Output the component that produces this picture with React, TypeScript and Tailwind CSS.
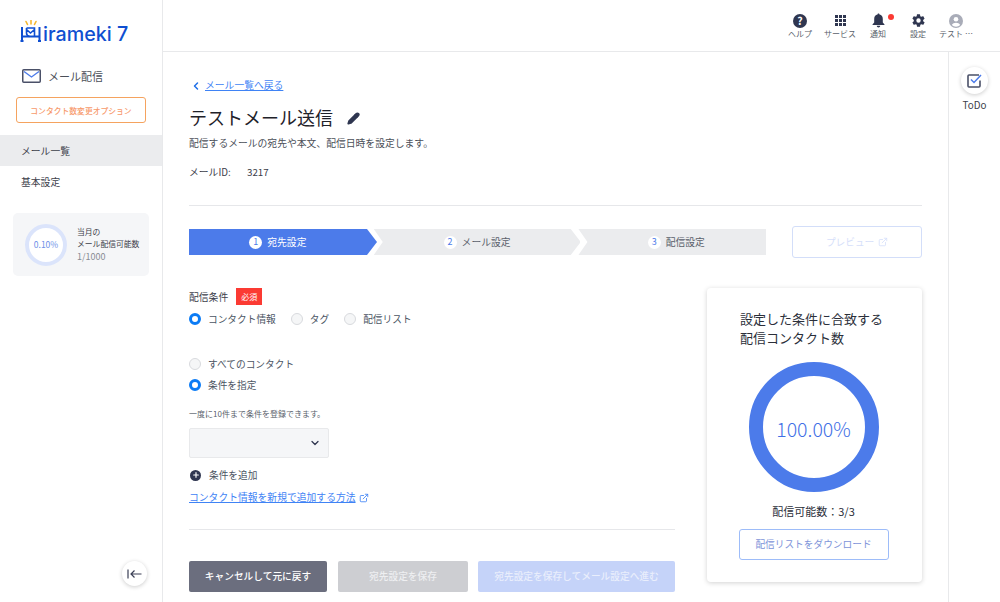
import React from 'react';
import { ChevronDown, ChevronLeft, ExternalLink, Pencil, Plus } from 'lucide-react';

const font = { fontFamily: '"Noto Sans CJK JP", "Noto Sans", sans-serif' };

const Radio: React.FC<{ label: string; checked?: boolean }> = ({ label, checked }) => (
  <label className="flex items-center gap-[7px] h-[14px] text-[9.7px] leading-[14px] text-[#4b5563] whitespace-nowrap">
    {checked ? (
      <span className="w-3 h-3 rounded-full border-[3.5px] border-[#0b7bf5] bg-white"></span>
    ) : (
      <span className="w-3 h-3 rounded-full border border-[#d8dade] bg-[#f5f6f7]"></span>
    )}
    {label}
  </label>
);

const HeaderItem: React.FC<{ label: string; children: React.ReactNode; className: string }> = ({ label, children, className }) => (
  <div className={`flex flex-col items-center ${className}`}>
    <div className="h-[15px] flex items-center justify-center relative">{children}</div>
    <span className="text-[8px] leading-[12px] text-[#5a5f6b] whitespace-nowrap">{label}</span>
  </div>
);

const Step: React.FC<{ num: number; label: string; active?: boolean; className: string }> = ({ num, label, active, className }) => (
  <div className={`h-[26px] flex items-center justify-center gap-[5px] text-[9.8px] ${active ? 'bg-[#4c7bea] text-white' : 'bg-[#ebecee] text-[#5a5f6b]'} ${className}`}>
    <span className="w-[13px] h-[13px] rounded-full bg-white flex items-center justify-center text-[9px] text-[#4c7bea]">{num}</span>
    <span className="pt-[1px]">{label}</span>
  </div>
);

const Logo = () => (
  <div className="flex items-end h-[28px] text-[#0f4fd1]">
    <svg width="23" height="22" viewBox="0 0 23 22" fill="none" className="shrink-0">
      <path d="M2 7v14M0.500 21h3M19.500 7v14M18 21h3M2 16.500h17.500" stroke="#0f4fd1" strokeWidth="2" />
      <path d="M6.500 8h8v8.500M6.500 8v5c0 2 1 3 3 3.500M6.500 9.500l4 3.500 4-3.500" stroke="#0f4fd1" strokeWidth="1.600" />
      <path d="M6 1.500l1.500 3M11 0.500v3.500M16 1.500l-1.500 3" stroke="#f5b82e" strokeWidth="1.600" strokeLinecap="round" />
    </svg>
    <span className="text-[19.7px] leading-[24px] font-medium whitespace-nowrap -mb-[4px]" style={{ fontFamily: 'Inter, sans-serif' }}>irameki 7</span>
  </div>
);

export default function App() {
  return (
    <div className="flex w-[1000px] h-[602px] overflow-hidden bg-white text-[#2b2f3a]" style={font}>
      <aside className="w-[163px] shrink-0 border-r border-[#e8e9eb] flex flex-col">
        <div className="pl-[20px] pt-[14px]">
          <Logo />
        </div>
        <div className="flex items-center gap-[7px] pl-[22px] mt-[26px] h-[16px]">
          <svg width="19" height="14" viewBox="0 0 19 14" fill="none">
            <rect x="0.75" y="0.75" width="17.5" height="12.5" rx="1" stroke="#4a5068" strokeWidth="1.5" />
            <path d="M2 2.5l7.5 5.5 7.5-5.5" stroke="#4c7bea" strokeWidth="1.4" />
          </svg>
          <span className="text-[11px] text-[#4b4f58]">メール配信</span>
        </div>
        <button className="mx-[16px] mt-[13px] h-[26px] pt-[1px] rounded-[3px] border border-[#f5a35f] text-[7.8px] font-medium text-[#f79a6c] whitespace-nowrap">
          コンタクト数変更オプション
        </button>
        <nav className="mt-[12px] text-[9.8px]">
          <div className="h-[31px] pl-[21px] pt-[1px] flex items-center bg-[#ebecee] text-[#3c404a]">メール一覧</div>
          <div className="h-[32px] pl-[21px] pt-[1px] flex items-center text-[#3c404a]">基本設定</div>
        </nav>
        <div className="mx-[13px] mt-[15px] h-[63px] rounded-[5px] bg-[#f5f6f8] flex items-center pl-[12px] gap-[10px]">
          <div className="w-[42px] h-[42px] rounded-full border-[4px] border-[#dbe4fb] bg-white flex items-center justify-center text-[8.5px] text-[#6d8fe8]">
            0.10%
          </div>
          <div className="text-[7.8px] leading-[12px] text-[#3c404a] whitespace-nowrap">
            <div>当月の</div>
            <div>メール配信可能数</div>
            <div className="mt-[1px] text-[9px] text-[#888c94]">1/1000</div>
          </div>
        </div>
        <div className="mt-auto mb-[16px] mr-[15px] self-end w-[25px] h-[25px] rounded-full bg-white shadow-[0_1px_4px_rgba(0,0,0,0.2)] flex items-center justify-center">
          <svg width="15" height="10" viewBox="0 0 15 10" fill="none" stroke="#3a3f55" strokeWidth="1.2">
            <path d="M1 0.5v9M14.5 5H4M7.5 1.5L4 5l3.5 3.5" />
          </svg>
        </div>
      </aside>

      <div className="flex-1 flex flex-col min-w-0">
        <header className="h-[52px] shrink-0 border-b border-[#e8e9eb] flex items-start justify-end pt-[13px] pr-[24px]">
          <HeaderItem label="ヘルプ" className="w-[48px]">
            <svg width="14" height="14" viewBox="0 0 14 14">
              <circle cx="7" cy="7" r="7" fill="#2f3650" />
              <text x="7" y="10.6" textAnchor="middle" fontSize="10.5" fontWeight="700" fill="#fff">?</text>
            </svg>
          </HeaderItem>
          <HeaderItem label="サービス" className="w-[32px]">
            <div className="grid grid-cols-3 gap-[1px]">
              {Array.from({ length: 9 }).map((_, i) => (
                <span key={i} className="w-[3px] h-[3px] bg-[#2f3650]"></span>
              ))}
            </div>
          </HeaderItem>
          <HeaderItem label="通知" className="w-[44px]">
            <svg width="13" height="15" viewBox="0 0 13 15" fill="#2f3650">
              <path d="M6.5 0.5c.7 0 1 .5 1 1.1 2.2.5 3.3 2.1 3.3 4.4v3.4l1.7 2v.6H.5v-.6l1.7-2V6c0-2.300 1.100-3.900 3.300-4.400 0-.6.3-1.100 1-1.100zM4.800 12.800h3.400c0 1-.7 1.700-1.700 1.700s-1.700-.7-1.700-1.700z" />
            </svg>
            <span className="absolute -right-[9px] top-[1px] w-[6px] h-[6px] rounded-full bg-[#fb3a33]"></span>
          </HeaderItem>
          <HeaderItem label="設定" className="w-[36px]">
            <svg width="15" height="15" viewBox="0 0 24 24" fill="#2f3650">
              <path d="M19.400 13c.04-.33.06-.66.06-1s-.02-.67-.06-1l2.100-1.650c.2-.15.25-.42.12-.64l-2-3.460c-.12-.22-.38-.3-.6-.22l-2.500 1c-.52-.4-1.080-.73-1.700-.98l-.38-2.650A.49.49 0 0 0 14 2h-4c-.25 0-.46.18-.5.42l-.38 2.650c-.62.25-1.180.58-1.700.98l-2.500-1c-.22-.08-.48 0-.6.22l-2 3.460c-.13.22-.07.49.12.64L4.570 11c-.04.33-.07.67-.07 1s.03.67.07 1l-2.100 1.650c-.2.15-.25.42-.12.64l2 3.460c.12.22.38.3.6.22l2.500-1c.52.4 1.080.73 1.700.98l.38 2.650c.04.24.25.42.5.42h4c.25 0 .46-.18.5-.42l.38-2.650c.62-.25 1.180-.58 1.700-.98l2.500 1c.22.08.48 0 .6-.22l2-3.460c.12-.22.07-.49-.12-.64L19.400 13zM12 15.500a3.500 3.500 0 1 1 0-7 3.500 3.500 0 0 1 0 7z" />
            </svg>
          </HeaderItem>
          <HeaderItem label="テスト ⋯" className="w-[40px]">
            <svg width="14" height="14" viewBox="0 0 14 14">
              <circle cx="7" cy="7" r="7" fill="#a9acb8" />
              <circle cx="7" cy="5.300" r="2.300" fill="#fff" />
              <path d="M2.800 11c.8-1.500 2.500-2.300 4.200-2.300s3.400.8 4.200 2.300A5.800 5.800 0 0 1 7 12.800 5.800 5.800 0 0 1 2.800 11z" fill="#fff" />
            </svg>
          </HeaderItem>
        </header>

        <div className="flex-1 flex min-h-0">
          <main className="flex-1 min-w-0 pl-[26px] pr-[26px] pt-[26px]">
            <a className="flex items-center gap-[3px] text-[9.8px] leading-[15px] text-[#3f83f5] ml-[2px]">
              <ChevronLeft size={12} strokeWidth={3} className="text-[#1f6fe8] -ml-[1px]" />
              <span className="underline">メール一覧へ戻る</span>
            </a>
            <div className="flex items-center mt-[12px] h-[26px]">
              <h1 className="text-[18px] font-normal text-[#1f2229] -mt-[1px]">テストメール送信</h1>
              <Pencil size={13} strokeWidth={2.5} fill="#2f3650" className="ml-[14px] text-[#2f3650]" />
            </div>
            <p className="text-[9.8px] leading-[14px] mt-[5px] text-[#4b4f58]">配信するメールの宛先や本文、配信日時を設定します。</p>
            <div className="flex mt-[15px] text-[9.8px] leading-[15px] text-[#3c404a]">
              <span className="w-[58px]">メールID:</span>
              <span>3217</span>
            </div>
            <hr className="mt-[25px] border-[#e6e7ea]" />

            <div className="flex items-start mt-[23px]">
              <Step num={1} label="宛先設定" active className="w-[188px] pr-[10px] [clip-path:polygon(0_0,178px_0,188px_50%,178px_100%,0_100%)]" />
              <Step num={2} label="メール設定" className="w-[207px] -ml-[3px] [clip-path:polygon(0_0,197px_0,207px_50%,197px_100%,0_100%,9px_50%)]" />
              <Step num={3} label="配信設定" className="w-[188px] -ml-[2px] pl-[8px] [clip-path:polygon(0_0,100%_0,100%_100%,0_100%,9px_50%)]" />
              <button className="ml-[26px] w-[130px] h-[32px] -mt-[3px] rounded-[3px] border border-[#d3def9] text-[9.7px] text-[#d6e0fa] flex items-center justify-center gap-[4px]">
                プレビュー <ExternalLink size={10} />
              </button>
            </div>

            <div className="flex items-start mt-[30px]">
              <section className="w-[486px] shrink-0">
                <div className="flex items-center gap-[8px] h-[17px]">
                  <span className="text-[9.8px] pt-[1px] text-[#3c404a]">配信条件</span>
                  <span className="h-[17px] w-[26px] bg-[#fb3a33] text-white text-[8px] flex items-center justify-center">必須</span>
                </div>
                <div className="flex gap-[15px] mt-[7px]">
                  <Radio label="コンタクト情報" checked />
                  <Radio label="タグ" />
                  <Radio label="配信リスト" />
                </div>
                <div className="mt-[31px]">
                  <Radio label="すべてのコンタクト" />
                </div>
                <div className="mt-[7px]">
                  <Radio label="条件を指定" checked />
                </div>
                <p className="mt-[16px] text-[8px] leading-[12px] text-[#5a5f6b]">一度に10件まで条件を登録できます。</p>
                <div className="mt-[8px] w-[140px] h-[30px] rounded-[2px] border border-[#e8e9eb] bg-[#f5f6f8] flex items-center justify-end pr-[7px]">
                  <ChevronDown size={12} strokeWidth={2.5} className="text-[#2f3650]" />
                </div>
                <div className="mt-[10px] h-[14px] flex items-center gap-[8px] pl-[1px] text-[9.7px] text-[#4b5563]">
                  <span className="w-[11px] h-[11px] rounded-full bg-[#2f3650] flex items-center justify-center">
                    <Plus size={8} strokeWidth={3.5} className="text-white" />
                  </span>
                  条件を追加
                </div>
                <a className="mt-[8px] h-[15px] flex items-center gap-[3px] text-[9.8px] leading-[15px] text-[#3f83f5]">
                  <span className="underline">コンタクト情報を新規で追加する方法</span>
                  <ExternalLink size={10} />
                </a>
                <hr className="mt-[24px] border-[#e6e7ea]" />
                <div className="flex mt-[31px] text-[9.7px]">
                  <button className="w-[138px] h-[31px] rounded-[2px] bg-[#6b6e7e] text-white font-medium">キャンセルして元に戻す</button>
                  <button className="ml-[11px] w-[130px] h-[31px] rounded-[2px] bg-[#cdced2] text-[#eeeff1] font-medium">宛先設定を保存</button>
                  <button className="ml-[10px] w-[197px] h-[31px] rounded-[2px] bg-[#c5d3f9] text-[#e9eefc] font-medium">宛先設定を保存してメール設定へ進む</button>
                </div>
              </section>

              <section className="ml-[32px] w-[215px] h-[294px] shrink-0 rounded-[4px] bg-white shadow-[0_1px_5px_rgba(0,0,0,0.18)] flex flex-col items-center pt-[21px] pr-[2px]">
                <h2 className="w-full pl-[33px] text-[13px] leading-[19px] font-normal text-[#2b2f3a] whitespace-nowrap">
                  設定した条件に合致する<br />配信コンタクト数
                </h2>
                <div className="mt-[15px] w-[130px] h-[130px] rounded-full border-[14px] border-[#4c7bea] flex items-center justify-center pt-[4px] text-[19.5px] font-light text-[#3f6fe6]">
                  100.00%
                </div>
                <p className="mt-[11px] text-[11px] leading-[16px] text-[#2b2f3a]">配信可能数：3/3</p>
                <button className="mt-[10px] w-[150px] h-[31px] rounded-[3px] border border-[#9dbcf9] text-[9.7px] text-[#7e94d9]">配信リストをダウンロード</button>
              </section>
            </div>
          </main>
          <div className="w-[52px] shrink-0 border-l border-[#e8e9eb] flex flex-col items-center pt-[15px]">
            <div className="w-[27px] h-[27px] rounded-full bg-white shadow-[0_1px_4px_rgba(0,0,0,0.2)] flex items-center justify-center">
              <svg width="15" height="15" viewBox="0 0 15 15" fill="none">
                <path d="M13 7.500V13a1 1 0 0 1-1 1H2a1 1 0 0 1-1-1V3a1 1 0 0 1 1-1h10" stroke="#4a5068" strokeWidth="1.600" />
                <path d="M4 6.500l3 3 7-7.500" stroke="#4c7bea" strokeWidth="1.500" />
              </svg>
            </div>
            <span className="text-[9.8px] leading-[14px] mt-[4px] text-[#3c404a]">ToDo</span>
          </div>
        </div>
      </div>
    </div>
  );
}
